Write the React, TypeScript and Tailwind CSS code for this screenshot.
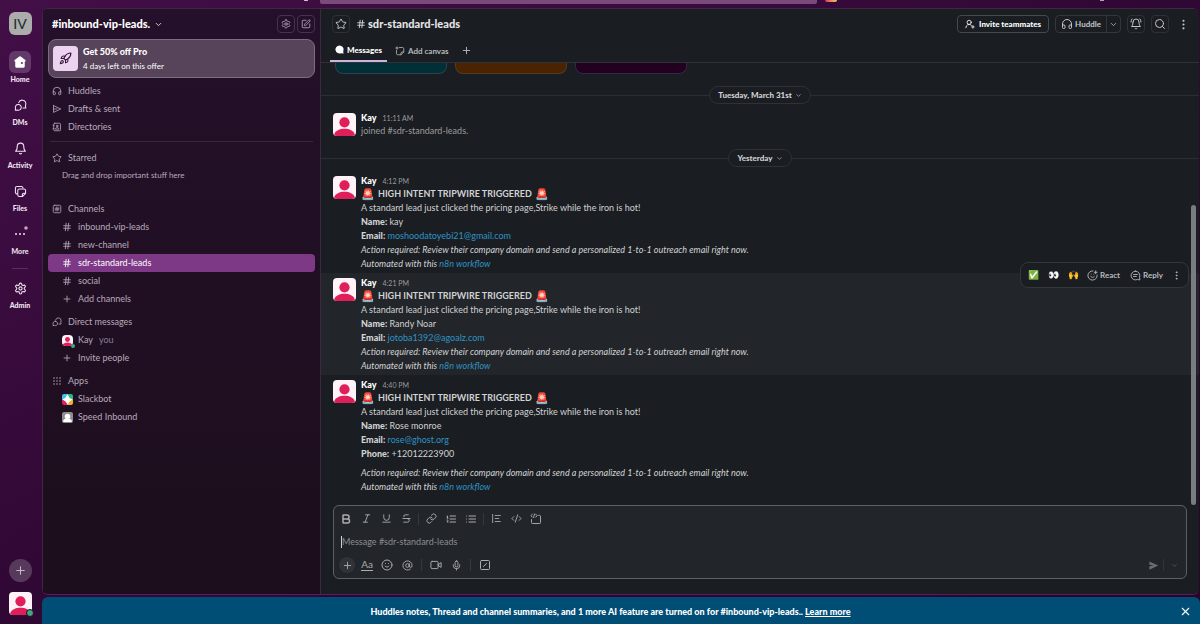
import React from 'react'
import {
  LuAtSign,
  LuBell,
  LuBellRing,
  LuBold,
  LuChevronDown,
  LuCodeXml,
  LuEllipsisVertical,
  LuHash,
  LuHeadphones,
  LuItalic,
  LuLink,
  LuList,
  LuListOrdered,
  LuMic,
  LuPlus,
  LuRocket,
  LuSearch,
  LuSettings,
  LuSmile,
  LuSmilePlus,
  LuSquarePen,
  LuSquareSlash,
  LuStar,
  LuStrikethrough,
  LuUnderline,
  LuUserRoundPlus,
  LuX,
} from 'react-icons/lu'

type IconProps = { size?: number; className?: string }

function Svg({ size = 12, className = '', children }: IconProps & { children: React.ReactNode }) {
  return (
    <svg width={size} height={size} viewBox="0 0 20 20" fill="none" stroke="currentColor" strokeWidth="1.6" strokeLinecap="round" strokeLinejoin="round" className={className}>
      {children}
    </svg>
  )
}

const HomeIcon = (p: IconProps) => (
  <Svg {...p}>
    <path fill="currentColor" fillRule="evenodd" stroke="none" d="M9 2.1a1.7 1.7 0 0 1 2 0l6.6 5c.6.4.7 1.2.3 1.7-.3.4-.7.5-1.1.5v6.6a2.2 2.2 0 0 1-2.2 2.2H5.4a2.2 2.2 0 0 1-2.2-2.2V9.3c-.4 0-.8-.1-1.1-.5-.4-.5-.3-1.3.3-1.7L9 2.1zM12.7 10a1.5 1.5 0 1 0 0 3 1.5 1.5 0 0 0 0-3z" />
  </Svg>
)
const DmIcon = (p: IconProps) => (
  <Svg {...p}>
    <path d="M7.3 5.6a5.6 5.6 0 0 1 10.9 2c0 1.2-.3 2.1-.7 3l.7 3.4h-4.4" />
    <path d="M6.6 8.4a4.4 4.4 0 1 1-1.7 8.4l-3 .5.5-2.7a4.4 4.4 0 0 1 4.2-6.2z" />
  </Svg>
)
const FilesIcon = (p: IconProps) => (
  <Svg {...p}>
    <path d="M5 13.7a2.5 2.5 0 0 1-2.8-2.5V4.7a2.5 2.5 0 0 1 2.5-2.5h6.5a2.5 2.5 0 0 1 2.6 2.5" />
    <path d="M8.3 6h7a2.5 2.5 0 0 1 2.5 2.5v4.3l-5 5H8.3a2.5 2.5 0 0 1-2.5-2.5V8.5A2.5 2.5 0 0 1 8.3 6zM17.5 12.8h-2.7a2 2 0 0 0-2 2v2.7" />
  </Svg>
)
const SendOutline = (p: IconProps) => (
  <Svg {...p}>
    <path d="M3 3.2 17.5 10 3 16.8V3.2zM3 10h7" />
  </Svg>
)
const SendFilled = (p: IconProps) => (
  <Svg {...p}>
    <path fill="currentColor" stroke="none" d="M2.5 2.5 18.5 10l-16 7.5v-6l8-1.5-8-1.5v-6z" />
  </Svg>
)
const DirectoryIcon = (p: IconProps) => (
  <Svg {...p}>
    <rect x="3.5" y="2.5" width="13.5" height="15" rx="2" />
    <path d="M2 6.5h2M2 13.5h2M7 13.5c.4-1.7 1.7-2.5 3.3-2.5s2.9.8 3.3 2.5z" />
    <circle cx="10.3" cy="8" r="1.6" />
  </Svg>
)
const ChannelsIcon = (p: IconProps) => (
  <Svg {...p}>
    <rect x="2.5" y="2.5" width="15" height="15" rx="2.5" />
    <path d="M8.8 6 8 14M12.2 6l-.8 8M6.2 8.5h8M5.9 11.5h8" strokeWidth="1.3" />
  </Svg>
)
const AppsIcon = (p: IconProps) => (
  <Svg {...p}>
    {[4, 10, 16].map((x) => [4, 10, 16].map((y) => <circle key={`${x}-${y}`} cx={x} cy={y} r="1.5" fill="currentColor" stroke="none" />))}
  </Svg>
)
const MessagesIcon = (p: IconProps) => (
  <Svg {...p}>
    <path fill="currentColor" stroke="none" d="M10 1a9 9 0 0 1 8.2 12.7l.8 4.5c.1.5-.3.9-.8.8l-4.5-.8A9 9 0 1 1 10 1z" />
  </Svg>
)
const CanvasIcon = (p: IconProps) => (
  <Svg {...p}>
    <path d="M9 3h6a2.5 2.5 0 0 1 2.5 2.5V12L12 17.5H5.5A2.5 2.5 0 0 1 3 15V9M17.5 12H14a2 2 0 0 0-2 2v3.5M4 1.500v5M1.500 4h5" />
  </Svg>
)
const QuoteIcon = (p: IconProps) => (
  <Svg {...p}>
    <path d="M3 2.5v15M7.5 4.5H17M7.5 10H14M7.5 15.5H17" />
  </Svg>
)
const CodeBlockIcon = (p: IconProps) => (
  <Svg {...p}>
    <path d="M14.5 4H16a1.5 1.5 0 0 1 1.5 1.5V16a1.5 1.5 0 0 1-1.5 1.5H4A1.5 1.5 0 0 1 2.5 16v-5M4 2 1.5 4.5 4 7M9.5 2 12 4.500 9.500 7M7.600 1.500 6 7.500" />
  </Svg>
)
const VideoIcon = (p: IconProps) => (
  <Svg {...p}>
    <rect x="1.5" y="4" width="12" height="12" rx="2" />
    <path d="m13.5 9.5 5-3.5v8l-5-3.5" />
  </Svg>
)
const ReplyIcon = (p: IconProps) => (
  <Svg {...p}>
    <path d="M10 2a8 8 0 0 1 7.3 11.2L18 18l-4.7-.7A8 8 0 1 1 10 2zM6.5 8.2h7M6.5 11.8h5" />
  </Svg>
)

function Avatar({ size = 22 }: { size?: number }) {
  return (
    <svg width={size} height={size} viewBox="0 0 36 36" className="shrink-0 rounded" role="img" aria-label="Kay">
      <rect width="36" height="36" fill="#fff3f8" />
      <circle cx="18" cy="14.5" r="8" fill="#e01e5a" />
      <path d="M2 36v-3c1.5-5.5 8.5-8.5 16-8.5s14.5 3 16 8.5v3z" fill="#e01e5a" />
    </svg>
  )
}

function SlackbotLogo() {
  return (
    <svg width="11" height="11" viewBox="0 0 20 20" className="rounded-xs">
      <rect width="10" height="10" fill="#36c5f0" />
      <rect x="10" width="10" height="10" fill="#2eb67d" />
      <rect y="10" width="10" height="10" fill="#e01e5a" />
      <rect x="10" y="10" width="10" height="10" fill="#ecb22e" />
      <path d="M10 2.500c1.500 4 3.500 6 7.500 7.500-4 1.500-6 3.500-7.500 7.500-1.500-4-3.500-6-7.500-7.500 4-1.500 6-3.500 7.500-7.500z" fill="#fff" stroke="#fff" strokeWidth="2" />
    </svg>
  )
}

function AppLogo() {
  return (
    <svg width="11" height="11" viewBox="0 0 20 20" className="rounded-xs">
      <rect width="20" height="20" fill="#8d8d8d" />
      <path d="M2 18c0-4 3-6 8-6s8 2 8 6z" fill="#fff" />
      <circle cx="10" cy="8" r="5" fill="#fff" />
    </svg>
  )
}

function MoreDots() {
  return (
    <svg width="16" height="16" viewBox="0 0 16 16" fill="#f0e4f1">
      <circle cx="4" cy="8" r="1" />
      <circle cx="8" cy="8" r="1" />
      <circle cx="12" cy="8" r="1" />
      <circle cx="14" cy="2" r="1.8" fill="#c99bd0" />
    </svg>
  )
}

const railItems = [
  { title: 'Home', icon: <HomeIcon size={14} />, active: true },
  { title: 'DMs', icon: <DmIcon size={13} /> },
  { title: 'Activity', icon: <LuBell size={13} /> },
  { title: 'Files', icon: <FilesIcon size={13} /> },
  { title: 'More', icon: <MoreDots /> },
]

function RailButton({ title, icon, active }: { title: string; icon: React.ReactNode; active?: boolean }) {
  return (
    <button className="flex flex-col items-center cursor-pointer text-[#f0e4f1]">
      <span className={active ? 'flex size-[22px] items-center justify-center rounded-md bg-[#63396a] text-white' : 'flex size-[22px] items-center justify-center'}>{icon}</span>
      <span className="text-[7px] leading-3 font-black">{title}</span>
    </button>
  )
}

function Rail() {
  return (
    <nav className="flex w-[42px] shrink-0 flex-col items-center pr-0.5 pt-1 pb-[9px]">
      <button className="size-[23px] rounded-md bg-[#abacab] text-sm leading-none font-medium text-[#1f3335]">IV</button>
      <div className="mt-4 flex flex-col items-center gap-[9px]">
        {railItems.map((item) => (
          <RailButton key={item.title} title={item.title} icon={item.icon} active={item.active} />
        ))}
      </div>
      <div className="mt-[11px] mb-2 h-px w-4 bg-[#5a2f5e]"></div>
      <RailButton title="Admin" icon={<LuSettings size={13} />} />
      <button aria-label="Create new" className="mt-auto flex size-[23px] items-center justify-center rounded-full bg-[#573a5b] text-[#c9b6cc]">
        <LuPlus size={13} />
      </button>
      <button aria-label="Profile" className="relative mt-[10px]">
        <Avatar size={23} />
        <span className="absolute -right-0.5 -bottom-0.5 size-2 rounded-full border border-[#270628] bg-[#3daa7c]"></span>
      </button>
    </nav>
  )
}

function SideRow({ icon, label, child, active, note }: { icon: React.ReactNode; label: string; child?: boolean; active?: boolean; note?: string }) {
  return (
    <a
      href="#"
      className={
        active
          ? 'flex h-[18px] items-center rounded bg-[#7d3986] pl-3.5 text-white'
          : child
            ? 'flex h-[18px] items-center pl-3.5'
            : 'flex h-[18px] items-center pl-1'
      }
    >
      <span className="flex w-4 items-center">{icon}</span>
      {label}
      {note && <span className="ml-1.5 text-[#8b7b8f]">{note}</span>}
    </a>
  )
}

const channels = ['inbound-vip-leads', 'new-channel', 'sdr-standard-leads', 'social']

function Sidebar() {
  return (
    <aside className="flex w-[279px] shrink-0 flex-col border-x border-[#3f2743] bg-linear-to-b from-[#24102a] to-[#1c0e1c] pr-[5px] pl-[5px] text-[9px] text-[#b9aabc]">
      <div className="flex h-[30px] items-center pl-1">
        <button className="flex items-center gap-1 text-[11px] font-black text-white">
          #inbound-vip-leads. <LuChevronDown size={9} />
        </button>
        <button aria-label="Settings" className="ml-auto flex size-[18px] items-center justify-center rounded border border-[#49304d]">
          <LuSettings size={10} />
        </button>
        <button aria-label="New message" className="ml-0.5 flex size-[18px] items-center justify-center rounded border border-[#49304d]">
          <LuSquarePen size={10} />
        </button>
      </div>
      <a href="#" className="flex h-[39px] items-center gap-[5px] rounded-lg border border-[#806b84] bg-[#57445b] px-1 text-white">
        <span className="flex size-[25px] items-center justify-center rounded bg-[#ecd3ef] text-[#3b1442]">
          <LuRocket size={13} />
        </span>
        <span className="flex flex-col">
          <span className="leading-[14px] font-black">Get 50% off Pro</span>
          <span className="text-[8px] leading-[14px]">4 days left on this offer</span>
        </span>
      </a>
      <div className="mt-1 flex flex-col">
        <SideRow icon={<LuHeadphones size={10} />} label="Huddles" />
        <SideRow icon={<SendOutline size={10} />} label="Drafts & sent" />
        <SideRow icon={<DirectoryIcon size={10} />} label="Directories" />
      </div>
      <div className="mx-0.5 mt-[5px] h-px bg-[#3a2540]"></div>
      <div className="mt-[7px] flex flex-col">
        <SideRow icon={<LuStar size={10} />} label="Starred" />
        <p className="pl-[14px] text-[8px] leading-4">Drag and drop important stuff here</p>
      </div>
      <div className="mt-[17px] flex flex-col">
        <SideRow icon={<ChannelsIcon size={10} />} label="Channels" />
        {channels.map((name) => (
          <SideRow key={name} child icon={<LuHash size={10} />} label={name} active={name === 'sdr-standard-leads'} />
        ))}
        <SideRow child icon={<LuPlus size={10} />} label="Add channels" />
      </div>
      <div className="mt-[5px] flex flex-col">
        <SideRow icon={<DmIcon size={10} />} label="Direct messages" />
        <SideRow
          child
          icon={
            <span className="relative">
              <Avatar size={11} />
              <span className="absolute -right-0.5 -bottom-0.5 size-1 rounded-full bg-[#3daa7c]"></span>
            </span>
          }
          label="Kay"
          note="you"
        />
        <SideRow child icon={<LuPlus size={10} />} label="Invite people" />
      </div>
      <div className="mt-[5px] flex flex-col">
        <SideRow icon={<AppsIcon size={10} />} label="Apps" />
        <SideRow child icon={<SlackbotLogo />} label="Slackbot" />
        <SideRow child icon={<AppLogo />} label="Speed Inbound" />
      </div>
    </aside>
  )
}

function ChannelHeader() {
  return (
    <header className="border-b border-[#2e3136]">
      <div className="flex h-[30px] items-center gap-1.5 pr-2 pl-[11px] text-[8px] text-[#c4c5c7]">
        <button aria-label="Star channel" className="flex size-[18px] items-center justify-center rounded border border-[#2e3136]">
          <LuStar size={12} />
        </button>
        <h1 className="flex items-center gap-0.5 text-[11px] font-black text-[#e3e4e5]">
          <LuHash size={10} /> sdr-standard-leads
        </h1>
        <button className="ml-auto flex h-[18px] items-center gap-1 rounded border border-[#46494d] px-[7px] font-black text-white">
          <LuUserRoundPlus size={10} /> Invite teammates
        </button>
        <div className="flex h-[18px] items-center rounded border border-[#33363b]">
          <button className="flex h-full items-center gap-0.5 border-r border-[#33363b] px-[5px] font-bold">
            <LuHeadphones size={12} /> Huddle
          </button>
          <button aria-label="Huddle options" className="px-0.5">
            <LuChevronDown size={9} />
          </button>
        </div>
        <button aria-label="Notifications" className="flex size-[18px] items-center justify-center rounded border border-[#2e3136]">
          <LuBellRing size={12} />
        </button>
        <button aria-label="Search" className="flex size-[18px] items-center justify-center rounded border border-[#2e3136]">
          <LuSearch size={12} />
        </button>
        <button aria-label="More actions" className="flex h-[18px] w-4 items-center justify-center">
          <LuEllipsisVertical size={13} />
        </button>
      </div>
      <div className="flex h-[23px] items-center gap-2 px-[9px] text-[8px] text-[#b9babd]">
        <button className="flex h-full items-center gap-[3px] border-b-2 border-[#c9b5dd] px-[5px] font-black text-white">
          <MessagesIcon size={9} /> Messages
        </button>
        <button className="flex items-center gap-[3px] font-bold">
          <CanvasIcon size={10} /> Add canvas
        </button>
        <button aria-label="Add tab" className="px-1">
          <LuPlus size={11} />
        </button>
      </div>
    </header>
  )
}

function DayDivider({ label }: { label: string }) {
  return (
    <div className="flex h-[18px] items-center">
      <div className="h-px flex-1 bg-[#2b2e33]"></div>
      <button className="flex h-[18px] items-center gap-[3px] rounded-full border border-[#2e3136] px-2 text-[8px] font-black text-[#d1d2d3]">
        {label} <LuChevronDown size={7} />
      </button>
      <div className="h-px flex-1 bg-[#2b2e33]"></div>
    </div>
  )
}

function MessageRow({ time, hover, children }: { time: string; hover?: boolean; children: React.ReactNode }) {
  return (
    <article className={hover ? 'relative flex gap-[5px] bg-[#222529] pt-[3px] pr-4 pb-0.5 pl-3' : 'flex gap-[5px] pt-[3px] pr-4 pb-0.5 pl-3'}>
      <div className="pt-0.5">
        <Avatar size={23} />
      </div>
      <div className="text-[9px] leading-[14px] text-[#d1d2d3]">
        <div className="flex h-[13px] items-baseline gap-1.5">
          <b className="leading-[13px] font-black text-white">Kay</b>
          <time className="text-[7px] leading-[13px] text-[#9b9c9e]">{time}</time>
        </div>
        {children}
      </div>
      {hover && <HoverActions />}
    </article>
  )
}

function HoverActions() {
  return (
    <div className="absolute -top-[11px] right-[10px] flex h-[26px] items-center rounded-lg border border-[#33363b] bg-[#1a1d21] px-0.5 text-[8px] font-bold text-[#b9babd]">
      {['✅', '👀', '🙌'].map((emoji) => (
        <button key={emoji} className="w-5 text-center text-[9px] font-normal">
          {emoji}
        </button>
      ))}
      <button className="flex items-center gap-0.5 px-1">
        <LuSmilePlus size={11} /> React
      </button>
      <button className="flex items-center gap-0.5 pr-1 pl-1.5">
        <ReplyIcon size={11} /> Reply
      </button>
      <button aria-label="More" className="px-1">
        <LuEllipsisVertical size={11} />
      </button>
    </div>
  )
}

const leads = [
  { time: '4:12 PM', name: 'kay', email: 'moshoodatoyebi21@gmail.com' },
  { time: '4:21 PM', name: 'Randy Noar', email: 'jotoba1392@agoalz.com', hover: true },
  { time: '4:40 PM', name: 'Rose monroe', email: 'rose@ghost.org', phone: '+12012223900' },
]

function Messages() {
  return (
    <section className="min-h-0 flex-1 overflow-hidden">
      <div className="flex gap-2 pl-3.5">
        <div className="h-[11px] w-28 rounded-b-lg border border-t-0 border-[#2b4348] bg-[#012f38]"></div>
        <div className="h-[11px] w-28 rounded-b-lg border border-t-0 border-[#553a1e] bg-[#4a2400]"></div>
        <div className="h-[11px] w-28 rounded-b-lg border border-t-0 border-[#3b2440] bg-[#22001f]"></div>
      </div>
      <div className="mt-3 mb-1">
        <DayDivider label="Tuesday, March 31st" />
      </div>
      <MessageRow time="11:11 AM">
        <p className="text-[#9b9c9e]">joined #sdr-standard-leads.</p>
      </MessageRow>
      <div className="mt-[9px] mb-1">
        <DayDivider label="Yesterday" />
      </div>
      {leads.map((lead) => (
        <MessageRow key={lead.time} time={lead.time} hover={lead.hover}>
          <p className="flex h-[14px] items-center gap-[3px] font-bold">
            <span className="text-[11px]">🚨</span> HIGH INTENT TRIPWIRE TRIGGERED <span className="text-[11px]">🚨</span>
          </p>
          <p>A standard lead just clicked the pricing page,Strike while the iron is hot!</p>
          <p>
            <b className="font-black">Name:</b> {lead.name}
          </p>
          <p>
            <b className="font-black">Email:</b>{' '}
            <a href={`mailto:${lead.email}`} className="text-[#2f94c4]">
              {lead.email}
            </a>
          </p>
          {lead.phone && (
            <p className="mb-[5px]">
              <b className="font-black">Phone:</b> {lead.phone}
            </p>
          )}
          <p className="italic">Action required: Review their company domain and send a personalized 1-to-1 outreach email right now.</p>
          <p className="italic">
            Automated with this{' '}
            <a href="#" className="text-[#2f94c4]">
              n8n workflow
            </a>
          </p>
        </MessageRow>
      ))}
    </section>
  )
}

function Tool({ label, children }: { label: string; children: React.ReactNode }) {
  return (
    <button type="button" aria-label={label} className="flex size-5 items-center justify-center">
      {children}
    </button>
  )
}

function Composer() {
  return (
    <form className="mr-3 mb-[15px] ml-3 rounded-md border border-[#5d6064] bg-[#222529] text-[#abacae]">
      <div className="flex h-[25px] items-center px-0.5">
        <Tool label="Bold"><LuBold size={12} strokeWidth={3} /></Tool>
        <Tool label="Italic"><LuItalic size={11} /></Tool>
        <Tool label="Underline"><LuUnderline size={11} /></Tool>
        <Tool label="Strikethrough"><LuStrikethrough size={11} /></Tool>
        <span className="mx-0.5 h-3 w-px bg-[#35383d]"></span>
        <Tool label="Link"><LuLink size={11} /></Tool>
        <Tool label="Ordered list"><LuListOrdered size={12} /></Tool>
        <Tool label="Bulleted list"><LuList size={12} /></Tool>
        <span className="mx-0.5 h-3 w-px bg-[#35383d]"></span>
        <Tool label="Quote"><QuoteIcon size={11} /></Tool>
        <Tool label="Code"><LuCodeXml size={11} /></Tool>
        <Tool label="Code block"><CodeBlockIcon size={12} /></Tool>
      </div>
      <div className="flex h-[21px] items-center px-[7px]">
        <input aria-label="Message #sdr-standard-leads" placeholder="Message #sdr-standard-leads" className="h-3 w-full border-l border-[#d1d2d3] bg-transparent text-[9px] outline-none placeholder:text-[#8b8d90]" />
      </div>
      <div className="flex h-[26px] items-center pl-[3px]">
        <Tool label="Attach">
          <span className="flex size-4 items-center justify-center rounded-full bg-[#303338]"><LuPlus size={11} /></span>
        </Tool>
        <Tool label="Formatting"><span className="border-b border-current text-[10px] leading-[11px]">Aa</span></Tool>
        <Tool label="Emoji"><LuSmile size={12} /></Tool>
        <Tool label="Mention"><LuAtSign size={11} /></Tool>
        <span className="mx-1 h-3 w-px bg-[#35383d]"></span>
        <Tool label="Record video"><VideoIcon size={12} /></Tool>
        <Tool label="Record audio"><LuMic size={11} /></Tool>
        <span className="mx-1 h-3 w-px bg-[#35383d]"></span>
        <Tool label="Shortcuts"><LuSquareSlash size={12} /></Tool>
        <div className="ml-auto flex items-center pr-0.5 text-[#6b6e72]">
          <Tool label="Send"><SendFilled size={11} /></Tool>
          <span className="h-3 w-px bg-[#303338]"></span>
          <Tool label="Send options"><LuChevronDown size={7} /></Tool>
        </div>
      </div>
    </form>
  )
}

export default function App() {
  return (
    <div className="flex h-screen flex-col overflow-hidden bg-linear-to-br from-[#420f47] via-[#300834] to-[#26052a] font-['Lato',sans-serif]">
      <div className="flex h-2 shrink-0 items-start">
        <div className="flex w-80 justify-end pr-3">
          <span className="h-px w-1 rounded-full bg-[#d9c5db]"></span>
        </div>
        <div className="h-1 w-[497px] rounded-b-xs bg-[#7b4a7d]"></div>
        <span className="ml-2 h-0.5 w-3 rounded-b-full bg-linear-to-r from-[#e0245a] to-[#ecc85a]"></span>
        <span className="mr-24 ml-auto h-px w-1 bg-[#b99fbc]"></span>
      </div>
      <div className="flex min-h-0 flex-1">
        <Rail />
        <div className="flex min-w-0 flex-1 flex-col">
          <div className="mr-px flex min-h-0 flex-1 overflow-hidden rounded-md border-t border-b border-t-[#3f2743] border-b-[#5c1c60]">
            <Sidebar />
            <main className="relative flex min-w-0 flex-1 flex-col bg-[#1a1d21]">
              <ChannelHeader />
              <Messages />
              <Composer />
              <div className="absolute right-[3px] bottom-[89px] h-[300px] w-[5px] rounded-full bg-[#797c81]"></div>
            </main>
          </div>
          <div className="mt-0.5 flex h-[27px] shrink-0 items-center rounded-t-md bg-[#004d76] pt-0.5 pr-2 text-[9px] font-black text-white">
            <p className="flex-1 text-center">
              Huddles notes, Thread and channel summaries, and 1 more AI feature are turned on for #inbound-vip-leads..{' '}
              <a href="#" className="underline">
                Learn more
              </a>
            </p>
            <button aria-label="Dismiss">
              <LuX size={13} />
            </button>
          </div>
        </div>
      </div>
    </div>
  )
}
